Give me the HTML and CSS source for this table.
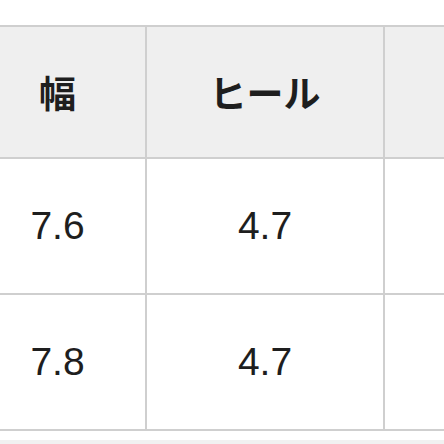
FILE: index.html
```html
<!DOCTYPE html>
<html lang="ja">
<head>
<meta charset="utf-8">
<link rel="stylesheet" href="styles.css">
</head>
<body>
<div class="page">
  <table class="size-table">
    <thead>
      <tr>
        <th class="c1">幅</th>
        <th class="c2">ヒール</th>
        <th class="c3"></th>
      </tr>
    </thead>
    <tbody>
      <tr>
        <td class="c1">7.6</td>
        <td class="c2">4.7</td>
        <td class="c3"></td>
      </tr>
      <tr>
        <td class="c1">7.8</td>
        <td class="c2">4.7</td>
        <td class="c3"></td>
      </tr>
    </tbody>
  </table>
  <div class="footer-band"></div>
</div>
</body>
</html>
```

FILE: styles.css
```css
html, body {
  margin: 0;
  padding: 0;
  background: #ffffff;
  overflow: hidden;
}
.page {
  width: 444px;
  height: 444px;
  padding-top: 25px;
  box-sizing: border-box;
  overflow: hidden;
}
.size-table {
  margin-left: -30px;
  border-collapse: separate;
  border-spacing: 0;
  border-top: 2px solid #cfcfcf;
  table-layout: fixed;
  width: 655px;
  font-family: "Liberation Sans", "Noto Sans CJK JP", sans-serif;
  color: #1e1e1e;
}
.size-table th,
.size-table td {
  border-right: 2px solid #cfcfcf;
  border-bottom: 2px solid #cfcfcf;
  text-align: center;
  vertical-align: middle;
  padding: 0;
  box-sizing: border-box;
}
.size-table th {
  background: #efefef;
  height: 132px;
  font-family: "Noto Sans CJK JP", sans-serif;
  font-weight: 700;
  font-size: 37px;
}
.size-table td {
  background: #ffffff;
  height: 136px;
  font-size: 39px;
  font-weight: 400;
}
.c1 { width: 177px; }
.c2 { width: 238px; }
.c3 { width: 240px; }
.footer-band {
  margin-top: 9px;
  height: 20px;
  background: #f1f1f1;
}
```
